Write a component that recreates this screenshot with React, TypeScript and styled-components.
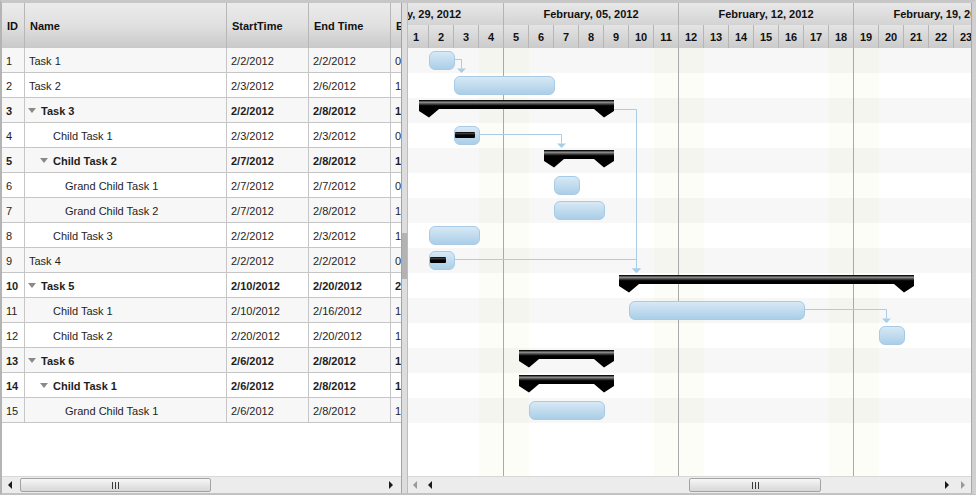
import React, { useId } from 'react';
import styled, { createGlobalStyle } from 'styled-components';

/* ---------- data ---------- */

const DAY = 25; // px per day column
const ROW = 25; // px per task row
const TOTAL_DAYS = 35; // Jan 29 .. Mar 3
const SCROLL_X = 79; // horizontal scroll offset of the timeline

type Task = {
  id: number;
  name: string;
  start: number; // day of February 2012
  end: number;
  level: number;
  summary?: boolean;
  effort: string;
  progress?: number; // px of the bar that is done
};

const tasks: Task[] = [
  { id: 1, name: 'Task 1', start: 2, end: 2, level: 0, effort: '0' },
  { id: 2, name: 'Task 2', start: 3, end: 6, level: 0, effort: '1' },
  { id: 3, name: 'Task 3', start: 2, end: 8, level: 0, summary: true, effort: '1' },
  { id: 4, name: 'Child Task 1', start: 3, end: 3, level: 1, effort: '0', progress: 20 },
  { id: 5, name: 'Child Task 2', start: 7, end: 8, level: 1, summary: true, effort: '1' },
  { id: 6, name: 'Grand Child Task 1', start: 7, end: 7, level: 2, effort: '0' },
  { id: 7, name: 'Grand Child Task 2', start: 7, end: 8, level: 2, effort: '1' },
  { id: 8, name: 'Child Task 3', start: 2, end: 3, level: 1, effort: '1' },
  { id: 9, name: 'Task 4', start: 2, end: 2, level: 0, effort: '0', progress: 16 },
  { id: 10, name: 'Task 5', start: 10, end: 20, level: 0, summary: true, effort: '2' },
  { id: 11, name: 'Child Task 1', start: 10, end: 16, level: 1, effort: '1' },
  { id: 12, name: 'Child Task 2', start: 20, end: 20, level: 1, effort: '1' },
  { id: 13, name: 'Task 6', start: 6, end: 8, level: 0, summary: true, effort: '1' },
  { id: 14, name: 'Child Task 1', start: 6, end: 8, level: 1, summary: true, effort: '1' },
  { id: 15, name: 'Grand Child Task 1', start: 6, end: 8, level: 2, effort: '1' },
];

// finish-to-start dependencies, by task id
const links: [number, number][] = [
  [1, 2],
  [4, 5],
  [3, 10],
  [9, 10],
  [11, 12],
];

const weeks = ['January, 29, 2012', 'February, 05, 2012', 'February, 12, 2012', 'February, 19, 2012', 'February, 26, 2012'];

// Jan 29 is column 0, so Feb d sits at column d + 2
const dayX = (febDay: number) => (febDay + 2) * DAY;
const dayLabel = (i: number) => (i < 3 ? 29 + i : i <= 31 ? i - 2 : i - 31);
const fmt = (d: number) => `2/${d}/2012`;

/* ---------- styles ---------- */

const GlobalStyle = createGlobalStyle`
  html, body { margin: 0; padding: 0; background: #fff; }
  body { font-family: "Liberation Sans", Arial, sans-serif; }
`;

const Frame = styled.div`
  width: 976px;
  height: 495px;
  box-sizing: border-box;
  display: flex;
  border-top: 3px solid #c7c7c7;
  border-left: 2px solid #b4b4b4;
  border-right: 4px solid #d0d0d0;
  border-bottom: 2px solid #c2c2c2;
  background: #fff;
  overflow: hidden;
  font-family: "Liberation Sans", Arial, sans-serif;
  font-size: 11px;
  color: #222;
`;

const COLS = '23px 202px 82px 82px 80px';

const GridPane = styled.div`
  width: 399px;
  flex: none;
  display: flex;
  flex-direction: column;
  overflow: hidden;
`;

const GridHeader = styled.div`
  display: grid;
  grid-template-columns: ${COLS};
  height: 45px;
  flex: none;
  background: linear-gradient(to bottom, #ebebeb 0%, #e0e0e0 50%, #c9c9c9 100%);
`;

const HeaderCell = styled.div`
  display: flex;
  align-items: center;
  padding-left: 5px;
  border-right: 1px solid #b7b7b7;
  font-weight: bold;
  color: #111;
  white-space: nowrap;
  overflow: hidden;
`;

const GridBody = styled.div`
  flex: 1;
  overflow: hidden;
  background: #fff;
`;

const GridRow = styled.div<{ $alt: boolean; $bold: boolean }>`
  display: grid;
  grid-template-columns: ${COLS};
  height: ${ROW}px;
  box-sizing: border-box;
  border-bottom: 1px solid #c6c6c6;
  background: ${(p) => (p.$alt ? '#f7f7f7' : '#ffffff')};
  font-weight: ${(p) => (p.$bold ? 'bold' : 'normal')};
`;

const Cell = styled.div`
  display: flex;
  align-items: center;
  padding-left: 4px;
  padding-top: 1px;
  border-right: 1px solid #c6c6c6;
  white-space: nowrap;
  overflow: hidden;
  color: #1e1e1e;
`;

const NameCell = styled(Cell)<{ $indent: number }>`
  padding-left: ${(p) => 4 + p.$indent}px;
`;

const Expander = styled.span`
  width: 12px;
  flex: none;
  display: flex;
  align-items: center;
  &::before {
    content: '';
    margin-left: -1px;
    border-left: 4px solid transparent;
    border-right: 4px solid transparent;
    border-top: 5px solid #8a8a8a;
  }
`;

const Splitter = styled.div`
  width: 7px;
  flex: none;
  box-sizing: border-box;
  border-left: 1px solid #a3a3a3;
  border-right: 1px solid #bdbdbd;
  background: #dddddd;
  display: flex;
  flex-direction: column;
  padding-top: 16px;
`;

const SplitterGrip = styled.div`
  height: 46px;
  margin: auto 0;
  background: #b3b3b3;
`;

const GanttPane = styled.div`
  flex: 1;
  min-width: 0;
  display: flex;
  flex-direction: column;
  border-right: 1px solid #a8a8a8;
  overflow: hidden;
`;

const Viewport = styled.div`
  flex: 1;
  overflow: hidden;
`;

const Timeline = styled.div<{ $scroll: number }>`
  width: ${TOTAL_DAYS * DAY}px;
  height: 100%;
  margin-left: ${(p) => -p.$scroll}px;
  display: flex;
  flex-direction: column;
`;

const WeekRow = styled.div`
  display: flex;
  height: 22px;
  flex: none;
  background: linear-gradient(to bottom, #e8e8e8 0%, #d3d3d3 100%);
`;

const WeekCell = styled.div`
  width: ${DAY * 7}px;
  flex: none;
  box-sizing: border-box;
  border-right: 1px solid #b3b3b3;
  display: flex;
  align-items: center;
  justify-content: center;
  font-weight: bold;
  color: #111;
  white-space: nowrap;
`;

const DayRow = styled.div`
  display: flex;
  height: 23px;
  flex: none;
  background: linear-gradient(to bottom, #e4e4e4 0%, #cbcbcb 100%);
`;

const DayCell = styled.div`
  width: ${DAY}px;
  flex: none;
  box-sizing: border-box;
  border-right: 1px solid #b5b5b5;
  display: flex;
  align-items: center;
  justify-content: center;
  font-weight: bold;
  color: #111;
`;

const ChartArea = styled.div`
  flex: 1;
  position: relative;
  background: #fff;
`;

const Stripe = styled.div<{ $alt: boolean }>`
  height: ${ROW}px;
  background: ${(p) => (p.$alt ? '#f7f7f7' : '#ffffff')};
`;

const ColumnLayer = styled.div`
  position: absolute;
  inset: 0;
  display: flex;
  pointer-events: none;
`;

const DayColumn = styled.div<{ $weekend: boolean; $weekEnd: boolean }>`
  width: ${DAY}px;
  flex: none;
  box-sizing: border-box;
  background: ${(p) => (p.$weekend ? 'rgba(236, 236, 190, 0.1)' : 'transparent')};
  border-right: ${(p) => (p.$weekEnd ? '1px solid #a9a9a9' : 'none')};
`;

const LinkLayer = styled.svg`
  position: absolute;
  left: 0;
  top: 0;
  overflow: visible;
  pointer-events: none;
`;

const TaskBar = styled.div<{ $x: number; $y: number; $w: number }>`
  position: absolute;
  left: ${(p) => p.$x}px;
  top: ${(p) => p.$y}px;
  width: ${(p) => p.$w}px;
  height: 19px;
  box-sizing: border-box;
  border: 1px solid #a8cae4;
  border-radius: 6px;
  background: linear-gradient(to bottom, #d7e9f5 0%, #c3dcef 45%, #aacfe8 100%);
`;

const ProgressFill = styled.div<{ $w: number }>`
  position: absolute;
  left: 0;
  top: 5px;
  width: ${(p) => p.$w}px;
  height: 6px;
  border-radius: 1px;
  background: linear-gradient(to bottom, #000 0%, #3c3c3c 25%, #050505 50%, #000 100%);
`;

const SummaryBar = styled.div<{ $x: number; $y: number }>`
  position: absolute;
  left: ${(p) => p.$x}px;
  top: ${(p) => p.$y}px;
  line-height: 0;
  svg {
    display: block;
  }
`;

const ScrollBar = styled.div`
  height: 17px;
  flex: none;
  box-sizing: border-box;
  display: flex;
  align-items: center;
  background: #ececec;
  border-top: 1px solid #d8d8d8;
`;

const ScrollButton = styled.div<{ $w: number }>`
  width: ${(p) => p.$w}px;
  height: 100%;
  flex: none;
  display: flex;
  align-items: center;
  justify-content: center;
`;

const Arrow = styled.span<{ $dir: 'left' | 'right'; $muted?: boolean }>`
  width: 0;
  height: 0;
  border-top: 4px solid transparent;
  border-bottom: 4px solid transparent;
  ${(p) =>
    p.$dir === 'left'
      ? `border-right: 4px solid ${p.$muted ? '#9a9a9a' : '#1a1a1a'};`
      : `border-left: 4px solid ${p.$muted ? '#9a9a9a' : '#1a1a1a'};`}
`;

const Track = styled.div`
  flex: 1;
  height: 100%;
  display: flex;
  align-items: center;
`;

const Thumb = styled.div<{ $left: number; $w: number }>`
  margin-left: ${(p) => p.$left}px;
  width: ${(p) => p.$w}px;
  height: 14px;
  box-sizing: border-box;
  border: 1px solid #a3a3a3;
  border-radius: 2px;
  background: linear-gradient(to bottom, #f7f7f7 0%, #e6e6e6 50%, #d8d8d8 100%);
  display: flex;
  align-items: center;
  justify-content: center;
`;

const Grip = styled.span`
  width: 7px;
  height: 7px;
  background: repeating-linear-gradient(to right, #3a3a3a 0 1px, transparent 1px 3px);
`;

/* ---------- pieces ---------- */

const SummaryShape: React.FC<{ width: number }> = ({ width }) => {
  const gid = 'sum' + useId().replace(/[^a-zA-Z0-9]/g, '');
  const w = width;
  const pts = `0,0 ${w},0 ${w},11 ${w - 10},17.5 ${w - 20},9 20,9 10,17.5 0,11`;
  return (
    <svg width={w} height={19} viewBox={`0 0 ${w} 19`}>
      <defs>
        <linearGradient id={gid} x1="0" y1="0" x2="0" y2="18" gradientUnits="userSpaceOnUse">
          <stop offset="0" stopColor="#050505" />
          <stop offset="0.06" stopColor="#1c1c1c" />
          <stop offset="0.11" stopColor="#9e9e9e" />
          <stop offset="0.2" stopColor="#575757" />
          <stop offset="0.32" stopColor="#000" />
          <stop offset="1" stopColor="#000" />
        </linearGradient>
      </defs>
      <polygon points={pts} fill={`url(#${gid})`} />
    </svg>
  );
};

const nameIndent = (t: Task) => {
  if (t.summary) return t.level * 12;
  return t.level === 0 ? 0 : t.level * 12 + 12;
};

const HScroll: React.FC<{ double?: boolean; thumbLeft: number; thumbWidth: number }> = ({
  double,
  thumbLeft,
  thumbWidth,
}) => (
  <ScrollBar>
    {double && (
      <ScrollButton $w={14}>
        <Arrow $dir="left" $muted />
      </ScrollButton>
    )}
    <ScrollButton $w={16}>
      <Arrow $dir="left" />
    </ScrollButton>
    <Track>
      <Thumb $left={thumbLeft} $w={thumbWidth}>
        <Grip />
      </Thumb>
    </Track>
    <ScrollButton $w={double ? 16 : 20}>
      <Arrow $dir="right" />
    </ScrollButton>
    {double && (
      <ScrollButton $w={16}>
        <Arrow $dir="right" $muted />
      </ScrollButton>
    )}
  </ScrollBar>
);

const TaskGrid: React.FC = () => (
  <GridPane>
    <GridHeader>
      <HeaderCell>ID</HeaderCell>
      <HeaderCell>Name</HeaderCell>
      <HeaderCell>StartTime</HeaderCell>
      <HeaderCell>End Time</HeaderCell>
      <HeaderCell>Effort</HeaderCell>
    </GridHeader>
    <GridBody>
      {tasks.map((t, i) => (
        <GridRow key={t.id} $alt={i % 2 === 0} $bold={!!t.summary}>
          <Cell>{t.id}</Cell>
          <NameCell $indent={nameIndent(t)}>
            {t.summary && <Expander />}
            {t.name}
          </NameCell>
          <Cell>{fmt(t.start)}</Cell>
          <Cell>{fmt(t.end)}</Cell>
          <Cell>{t.effort}</Cell>
        </GridRow>
      ))}
    </GridBody>
    <HScroll thumbLeft={2} thumbWidth={191} />
  </GridPane>
);

const Chart: React.FC = () => {
  const rowOf = (id: number) => tasks.findIndex((t) => t.id === id);
  const days = Array.from({ length: TOTAL_DAYS }, (_, i) => i);
  const chartHeight = 428;

  return (
    <GanttPane>
      <Viewport>
        <Timeline $scroll={SCROLL_X}>
          <WeekRow>
            {weeks.map((w) => (
              <WeekCell key={w}>{w}</WeekCell>
            ))}
          </WeekRow>
          <DayRow>
            {days.map((i) => (
              <DayCell key={i}>{dayLabel(i)}</DayCell>
            ))}
          </DayRow>
          <ChartArea>
            {tasks.map((t, i) => (
              <Stripe key={t.id} $alt={i % 2 === 0} />
            ))}
            <ColumnLayer>
              {days.map((i) => (
                <DayColumn key={i} $weekend={i % 7 === 0 || i % 7 === 6} $weekEnd={i % 7 === 6} />
              ))}
            </ColumnLayer>
            <LinkLayer width={TOTAL_DAYS * DAY} height={chartHeight}>
              {links.map(([from, to]) => {
                const a = tasks[rowOf(from)];
                const b = tasks[rowOf(to)];
                const ra = rowOf(from);
                const rb = rowOf(to);
                const sx = a.summary ? dayX(a.end + 1) + 10 : dayX(a.end + 1) + 1;
                const sy = ra * ROW + 11.5;
                const tx = dayX(b.start) + 7.5;
                const ty = rb * ROW;
                return (
                  <g key={`${from}-${to}`}>
                    <path d={`M${sx} ${sy} H${tx} V${ty - 4.5}`} fill="none" stroke="#a9cde7" strokeWidth={1} />
                    <polygon points={`${tx - 4.5},${ty - 4.5} ${tx + 4.5},${ty - 4.5} ${tx},${ty}`} fill="#a9cde7" />
                  </g>
                );
              })}
            </LinkLayer>
            {tasks.map((t, i) => {
              const top = i * ROW;
              if (t.summary) {
                const x = dayX(t.start) - 10;
                const w = (t.end - t.start + 1) * DAY + 20;
                return (
                  <SummaryBar key={t.id} $x={x} $y={top + 2}>
                    <SummaryShape width={w} />
                  </SummaryBar>
                );
              }
              return (
                <TaskBar key={t.id} $x={dayX(t.start)} $y={top + 3} $w={(t.end - t.start + 1) * DAY + 1}>
                  {t.progress ? <ProgressFill $w={t.progress} /> : null}
                </TaskBar>
              );
            })}
          </ChartArea>
        </Timeline>
      </Viewport>
      <HScroll double thumbLeft={251} thumbWidth={132} />
    </GanttPane>
  );
};

export default function App() {
  return (
    <>
      <GlobalStyle />
      <Frame>
        <TaskGrid />
        <Splitter>
          <SplitterGrip />
        </Splitter>
        <Chart />
      </Frame>
    </>
  );
}
